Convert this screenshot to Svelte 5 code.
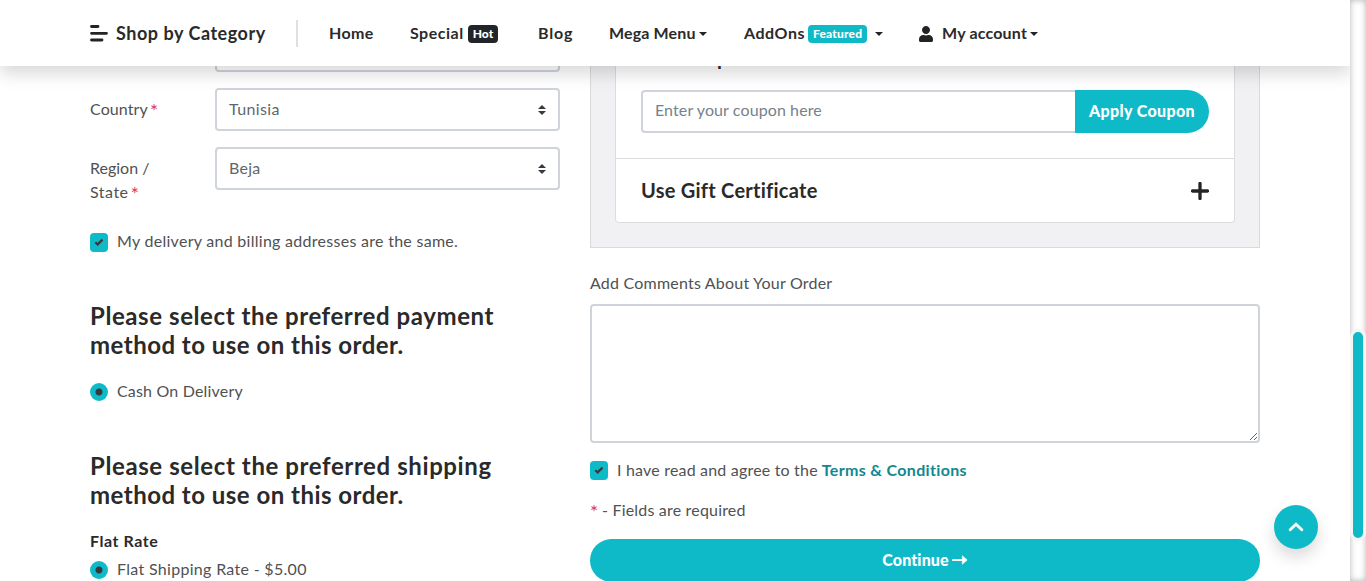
{#snippet t(text, ls)}<span class="t" style="letter-spacing:{ls}px">{text}</span>{/snippet}
{#snippet check()}
  <span class="check"><svg width="10" height="8" viewBox="0 0 10 8"><path d="M1.3 4.2 3.7 6.4 8.5 1.6" fill="none" stroke="#343a40" stroke-width="2.2" /></svg></span>
{/snippet}
{#snippet arrows()}
  <svg class="arrows" width="8" height="10" viewBox="0 0 4 5"><path fill="#343a40" d="M2 0 0 2h4zm0 5L0 3h4z" /></svg>
{/snippet}

<div class="window">
  <div class="page">
    <header>
      <button class="shop">
        <svg width="18" height="17" viewBox="0 0 18 17"><path d="M1.5 1.5h6.500M1.500 8.300h15M1.500 15h10.500" fill="none" stroke="#232323" stroke-width="2.800" stroke-linecap="round" /></svg>
        {@render t('Shop by Category', 0.53)}
      </button>
      <i class="sep"></i>
      <nav>
        <a class="home" href="#top">{@render t('Home', 0.4)}</a>
        <a class="special" href="#top">{@render t('Special', 0.5)}<b class="badge dark">{@render t('Hot', 0.1)}</b></a>
        <a class="blog" href="#top">{@render t('Blog', 0.85)}</a>
        <a class="mega" href="#top">{@render t('Mega Menu', 0.14)}<i class="caret"></i></a>
        <a class="addons" href="#top">{@render t('AddOns', 0.53)}<b class="badge">{@render t('Featured', 0.18)}</b><i class="caret wide"></i></a>
        <a class="account" href="#top"><svg width="14" height="16" viewBox="0 0 448 512"><path fill="#232323" d="M224 256c70.700 0 128-57.300 128-128S294.700 0 224 0 96 57.300 96 128s57.300 128 128 128zm89.600 32h-16.700c-22.200 10.200-46.900 16-72.900 16s-50.600-5.800-72.900-16h-16.700C60.200 288 0 348.200 0 422.400V464c0 26.500 21.500 48 48 48h352c26.500 0 48-21.500 48-48v-41.600c0-74.200-60.200-134.400-134.400-134.400z" /></svg>{@render t('My account', 0.18)}<i class="caret"></i></a>
      </nav>
    </header>

    <main>
      <section class="left">
        <div class="field-end"></div>
        <div class="row">
          <span class="label">{@render t('Country', 0.1)} <em>*</em></span>
          <div class="select">{@render t('Tunisia', 0.36)}{@render arrows()}</div>
        </div>
        <div class="row region">
          <span class="label">{@render t('Region /', 0)}<br />{@render t('State', 0.5)} <em>*</em></span>
          <div class="select">{@render t('Beja', 0.26)}{@render arrows()}</div>
        </div>
        <div class="option same">{@render check()}{@render t('My delivery and billing addresses are the same.', 0.28)}</div>
        <h2>{@render t('Please select the preferred payment', 0.58)}<br />{@render t('method to use on this order.', 0.48)}</h2>
        <div class="option cash"><span class="radio"></span>{@render t('Cash On Delivery', 0.18)}</div>
        <h2>{@render t('Please select the preferred shipping', 0.6)}<br />{@render t('method to use on this order.', 0.48)}</h2>
        <strong class="flat">{@render t('Flat Rate', 0.55)}</strong>
        <div class="option rate"><span class="radio"></span>{@render t('Flat Shipping Rate - $5.00', 0.31)}</div>
      </section>

      <section class="right">
        <div class="panel">
          <div class="card">
            <div class="coupon">
              <h3 class="cut">{@render t('Use Coupon Code', 0.2)}</h3>
              <div class="group">
                <div class="input">{@render t('Enter your coupon here', 0.1)}</div>
                <button class="apply">{@render t('Apply Coupon', 0.36)}</button>
              </div>
            </div>
            <div class="gift">
              <h3>{@render t('Use Gift Certificate', 0.26)}</h3>
              <svg width="18" height="18" viewBox="0 0 18 18"><path d="M9 1.500v15M1.500 9h15" stroke="#232323" stroke-width="3.300" stroke-linecap="round" /></svg>
            </div>
          </div>
        </div>
        <span class="comments">{@render t('Add Comments About Your Order', 0.21)}</span>
        <textarea aria-label="Comments"></textarea>
        <div class="option agree">{@render check()}<span>{@render t('I have read and agree to the', 0.19)}<a class="terms" href="#top">{@render t('Terms & Conditions', 0.34)}</a></span></div>
        <div class="required"><em>*</em>{@render t('- Fields are required', 0.19)}</div>
        <button class="continue">{@render t('Continue', 0.1)}<svg width="16" height="10" viewBox="0 0 16 10"><path d="M1 5h10" stroke="#fff" stroke-width="2.200" stroke-linecap="round" /><path d="M10.300.8v8.400L15.200 5z" fill="#fff" stroke="#fff" stroke-width=".6" stroke-linejoin="round" /></svg></button>
      </section>
    </main>
  </div>
  <div class="track"><div class="thumb"></div></div>
  <button class="top" aria-label="Back to top"><svg width="16" height="10" viewBox="0 0 16 10"><path d="M2.200 7.700 8 2.200l5.800 5.500" fill="none" stroke="#fff" stroke-width="2.900" stroke-linecap="round" /></svg></button>
</div>

<style>
  :global(body) { overflow: hidden; }
  .window { display: flex; width: 1366px; height: 581px; overflow: hidden; position: relative; background: #fff; font: 400 16px/24px Lato, "Open Sans", sans-serif; color: #505152; }
  .window :global(*) { box-sizing: border-box; }
  .page { width: 1350px; height: 581px; overflow: hidden; }
  .t { white-space: pre; display: inline-block; }
  main .t, nav a > .t { transform: translateY(-1px); }
  button { font: inherit; border: 0; padding: 0; background: none; color: inherit; }
  a { color: inherit; text-decoration: none; }
  em { color: #dc3545; font-style: normal; font-size: 19px; line-height: 26px; margin-left: -2px; display: inline-block; height: 20px; vertical-align: top; }
  svg { flex: none; display: block; }

  header { height: 66px; display: flex; align-items: center; padding-left: 90px; position: relative; z-index: 2; background: #fff; box-shadow: 0 8px 16px rgba(0, 0, 0, .15); color: #2a2a2a; font-weight: 700; }
  .shop { display: flex; align-items: center; gap: 8px; font-size: 18px; font-weight: 700; width: 206px; }
  .sep { width: 2px; height: 27px; background: #dee0e1; }
  nav { display: flex; padding-top: 1px; }
  nav a { display: flex; align-items: center; }
  .home { margin-left: 31px; width: 81px; }
  .special { width: 128px; }
  .blog { width: 71px; }
  .mega { width: 135px; }
  .addons { width: 175px; }
  .account svg { margin-right: 9px; }
  .badge { height: 18px; padding: 0 5px; border-radius: 4px; background: #0fbac8; color: #fff; font: 900 12px/18px Lato, sans-serif; margin-left: 3px; }
  .dark { background: #212529; margin-left: 4px; }
  .caret { border: 4px solid transparent; border-top-color: #232323; border-bottom: 0; margin-left: 3px; }
  .wide { margin-left: 8px; }

  main { display: flex; gap: 30px; padding-left: 90px; }
  .left { width: 470px; display: flex; flex-direction: column; }
  .field-end { height: 6px; margin: 0 0 16px 125px; border: 2px solid #ced4da; border-top: 0; border-radius: 0 0 4px 4px; }
  .row { display: flex; height: 43px; }
  .label { width: 125px; padding-top: 10px; }
  .region { margin-top: 16px; height: 60px; }
  .select { width: 345px; height: 43px; border: 2px solid #ced4da; border-radius: 4px; padding: 0 12px; display: flex; align-items: center; justify-content: space-between; color: #5f666c; }
  .option { display: flex; align-items: center; gap: 9px; height: 24px; }
  .same { margin-top: 23px; }
  .check { width: 18px; height: 19px; border-radius: 4px; background: #0fbac8; display: grid; place-items: center; }
  .agree .check { margin-top: -2px; }
  .radio { width: 18px; height: 18px; border-radius: 50%; background: radial-gradient(circle, #343a40 3px, #0fbac8 4px); }
  h2 { margin: 48px 0 0; font-size: 24px; line-height: 29px; font-weight: 700; color: #2a2a2a; }
  .cash { margin-top: 20px; }
  .flat { margin-top: 20px; font-weight: 700; color: #2a2a2a; }
  .rate { margin-top: 4px; }

  .right { width: 670px; display: flex; flex-direction: column; }
  .panel { height: 182px; padding: 0 24px 24px; background: #f1f1f4; border: 1px solid #d9dadc; border-top: 0; }
  .card { height: 157px; background: #fff; border: 1px solid #dcdddf; border-top: 0; border-radius: 0 0 4px 4px; }
  .coupon { display: flow-root; height: 93px; padding: 0 25px; border-bottom: 1px solid #dcdddf; }
  h3 { margin: 0; font-size: 20px; line-height: 24px; font-weight: 700; color: #2a2a2a; }
  .cut { margin-top: -20px; height: 44px; }
  .group { display: flex; }
  .input { flex: 1; height: 43px; border: 2px solid #ced4da; border-right: 0; border-radius: 4px 0 0 4px; padding: 7px 12px; color: #78818a; }
  .apply { width: 134px; height: 43px; border-radius: 0 22px 22px 0; background: #0fbac8; color: #fff; font-weight: 900; }
  .gift { height: 63px; padding: 0 25px; display: flex; justify-content: space-between; align-items: center; }
  .comments { margin-top: 24px; }
  textarea { height: 139px; margin: 8px 0 0; border: 2px solid #ced4da; border-radius: 4px; background: #fff; }
  .agree { margin-top: 16px; }
  .terms { color: #10888f; font-weight: 700; margin-left: 4px; }
  .required { display: flex; gap: 5px; margin-top: 16px; }
  .required em { margin-left: 0; width: 7px; }
  .continue { height: 43px; margin-top: 16px; border-radius: 22px; background: #0fbac8; color: #fff; font-weight: 900; display: flex; align-items: center; justify-content: center; gap: 3px; }
  .continue svg { margin-top: -2px; }

  .track { width: 16px; height: 581px; padding: 329px 0 0; background: #fff; box-shadow: inset 0 0 6px rgba(0, 0, 0, .3); }
  .thumb { height: 212px; border: 3px solid #f5f5f5; border-radius: 8px; background: #0fbac8; }
  .top { position: absolute; left: 1274px; top: 505px; width: 44px; height: 44px; border-radius: 50%; background: #0fbac8; display: grid; place-items: center; box-shadow: 0 8px 16px rgba(0, 0, 0, .15); }
</style>
